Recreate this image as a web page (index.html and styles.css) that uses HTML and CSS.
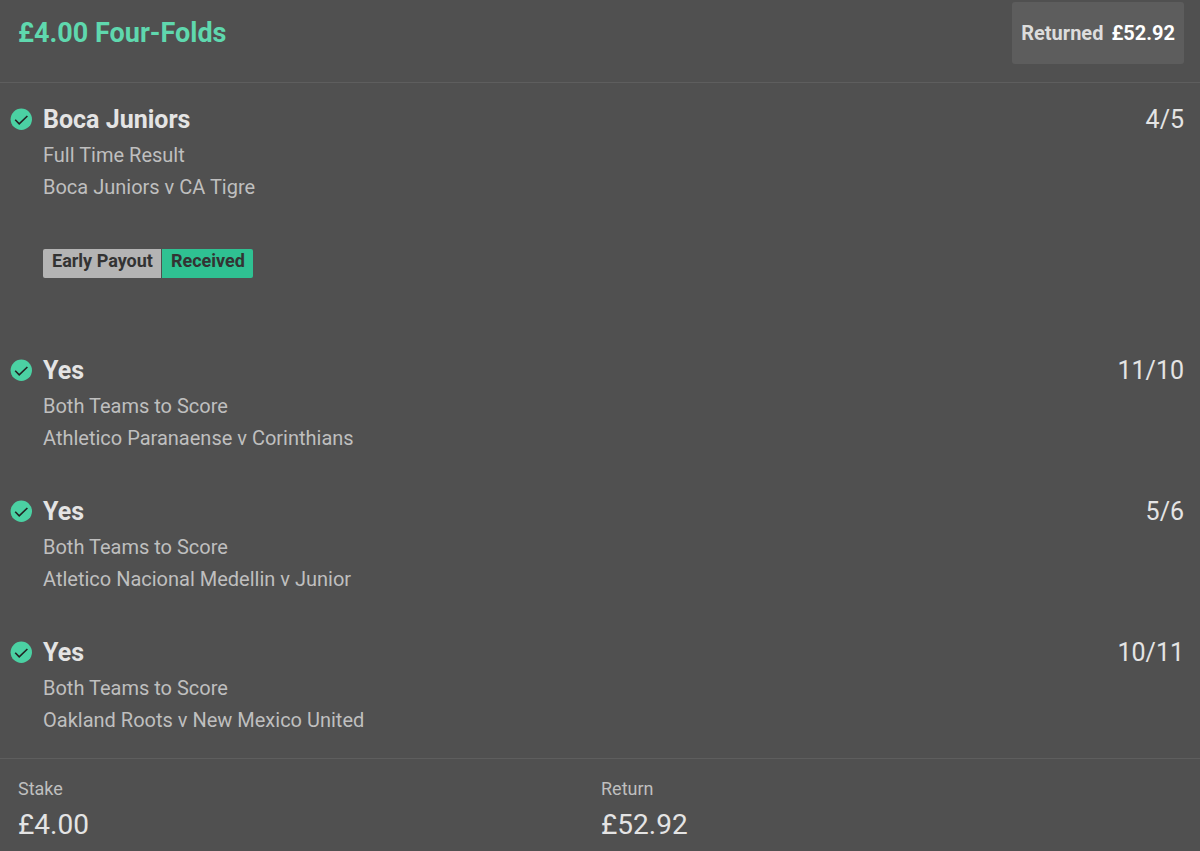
FILE: index.html
```
<!DOCTYPE html>
<html lang="en">
<head>
    <meta charset="UTF-8">
    <meta name="viewport" content="width=device-width, initial-scale=1.0">
    <title>Four-Folds</title>
    <link rel="stylesheet" href="styles.css">
</head>
<body>
    <header class="bet-header">
        <h1>£4.00 Four-Folds</h1>
        <div class="returned">
            <span>Returned</span>
            <span class="returned-amount">£52.92</span>
        </div>
    </header>

    <main class="selections">
        <section class="selection">
            <svg class="tick" viewBox="0 0 22 22" aria-hidden="true">
                <circle cx="11.3" cy="11.3" r="10.7"/>
                <path d="M5.2 11.8l4 4L17.4 8"/>
            </svg>
            <div class="details">
                <h2>Boca Juniors</h2>
                <p>Full Time Result</p>
                <p>Boca Juniors v CA Tigre</p>
                <div class="payout">
                    <span class="payout-label">Early Payout</span>
                    <span class="payout-status">Received</span>
                </div>
            </div>
            <span class="odds">4/5</span>
        </section>

        <section class="selection">
            <svg class="tick" viewBox="0 0 22 22" aria-hidden="true">
                <circle cx="11.3" cy="11.3" r="10.7"/>
                <path d="M5.2 11.8l4 4L17.4 8"/>
            </svg>
            <div class="details">
                <h2>Yes</h2>
                <p>Both Teams to Score</p>
                <p>Athletico Paranaense v Corinthians</p>
            </div>
            <span class="odds">11/10</span>
        </section>

        <section class="selection">
            <svg class="tick" viewBox="0 0 22 22" aria-hidden="true">
                <circle cx="11.3" cy="11.3" r="10.7"/>
                <path d="M5.2 11.8l4 4L17.4 8"/>
            </svg>
            <div class="details">
                <h2>Yes</h2>
                <p>Both Teams to Score</p>
                <p>Atletico Nacional Medellin v Junior</p>
            </div>
            <span class="odds">5/6</span>
        </section>

        <section class="selection">
            <svg class="tick" viewBox="0 0 22 22" aria-hidden="true">
                <circle cx="11.3" cy="11.3" r="10.7"/>
                <path d="M5.2 11.8l4 4L17.4 8"/>
            </svg>
            <div class="details">
                <h2>Yes</h2>
                <p>Both Teams to Score</p>
                <p>Oakland Roots v New Mexico United</p>
            </div>
            <span class="odds">10/11</span>
        </section>
    </main>

    <footer class="totals">
        <div class="total">
            <div class="total-label">Stake</div>
            <div class="total-value">£4.00</div>
        </div>
        <div class="total">
            <div class="total-label">Return</div>
            <div class="total-value">£52.92</div>
        </div>
    </footer>
</body>
</html>
```
FILE: styles.css
```
* {
    box-sizing: border-box;
}
body {
    font-family: Roboto, Arial, sans-serif;
    margin: 0;
    background-color: #505050;
    color: #e4e4e4;
}
h1, h2, p {
    margin: 0;
}
.bet-header {
    display: flex;
    justify-content: space-between;
    align-items: center;
    padding: 2px 16px 18px 18px;
    border-bottom: 1px solid #5e5e5e;
}
.bet-header h1 {
    font-size: 27px;
    line-height: 32px;
    color: #5fd8ae;
}
.returned {
    display: flex;
    gap: 8px;
    padding: 15px 9px;
    background-color: #5d5d5d;
    border-radius: 3px;
    font-size: 20px;
    font-weight: bold;
    line-height: 32px;
    color: #dcdcdc;
}
.returned-amount {
    color: #fff;
}
.selections {
    display: flex;
    flex-direction: column;
    gap: 37px;
    padding: 16px 16px 22px 10px;
}
.selection {
    display: flex;
    align-items: flex-start;
}
.tick {
    flex: none;
    width: 22px;
    height: 22px;
    margin: 9px 11px 0 0;
}
.tick circle {
    fill: #4bd1a3;
}
.tick path {
    fill: none;
    stroke: #222;
    stroke-width: 1.6;
}
.details {
    flex: 1;
}
.details h2 {
    padding-top: 2px;
    font-size: 25px;
    line-height: 38px;
}
.details p {
    font-size: 20px;
    line-height: 32px;
    color: #bfbfbf;
}
.payout {
    display: flex;
    gap: 1px;
    margin: 46px 0 35px;
    font-size: 18px;
    font-weight: bold;
    line-height: 24px;
    color: #333;
}
.payout-label,
.payout-status {
    padding: 0 8px 5px 9px;
}
.payout-label {
    background-color: #b4b4b4;
    border-radius: 2px 0 0 2px;
}
.payout-status {
    background-color: #2fc192;
    border-radius: 0 2px 2px 0;
}
.odds {
    padding-top: 2px;
    font-size: 25px;
    line-height: 38px;
}
.totals {
    display: grid;
    grid-template-columns: 1fr 1fr;
    padding: 17px 16px 3px 18px;
    border-top: 1px solid #5e5e5e;
}
.total-label {
    font-size: 18px;
    line-height: 26px;
    color: #bfbfbf;
}
.total-value {
    font-size: 28px;
    line-height: 46px;
}
```
